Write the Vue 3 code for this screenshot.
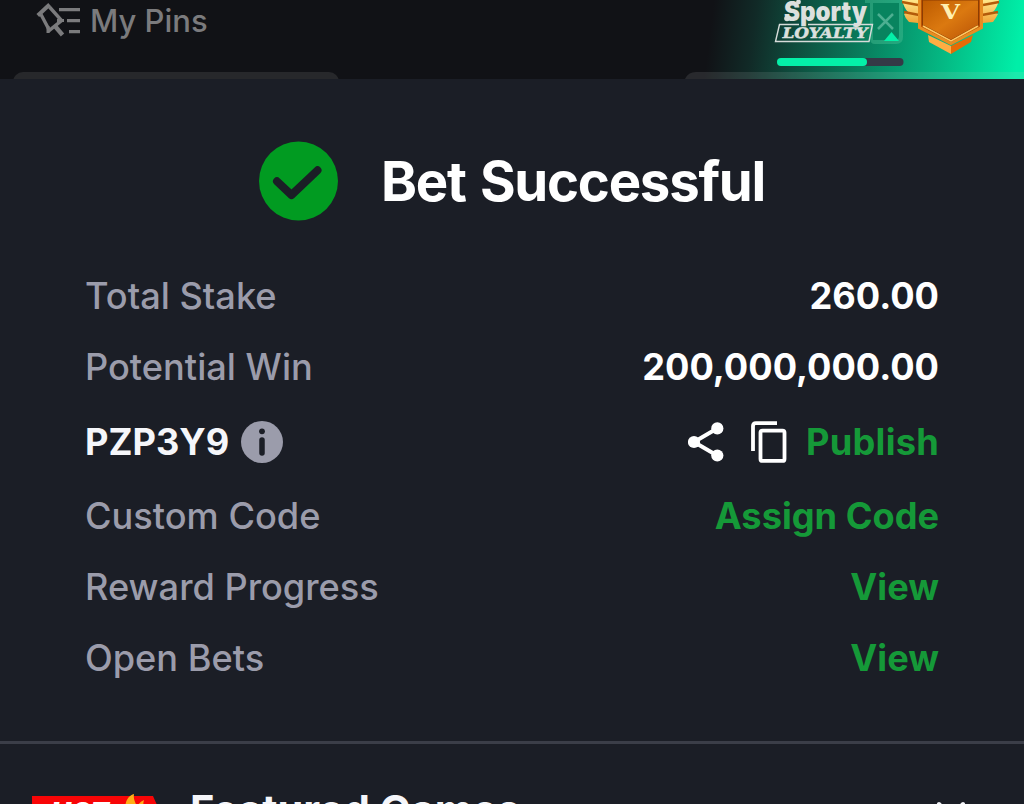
<script setup>
const summary = [
  { label: 'Total Stake', value: '260.00' },
  { label: 'Potential Win', value: '200,000,000.00' },
]
const actions = [
  { label: 'Custom Code', action: 'Assign Code' },
  { label: 'Reward Progress', action: 'View' },
  { label: 'Open Bets', action: 'View' },
]
</script>

<template>
  <main class="screen">
    <header class="topbar">
      <div class="pins">
        <svg class="pin-icon" width="46" height="38" viewBox="0 0 46 38" fill="none" stroke="#7b7b7d">
          <path d="M14.6 4.6 2.8 15.4" stroke-width="4" />
          <path d="M6 14.5 14.4 30.4 26.6 20.6 14.5 7" stroke-width="3.4" />
          <path d="M13 26V33M22 20.5H29" stroke-width="3" />
          <path d="M19.5 25.5 27.5 35" stroke-width="4.4" />
          <path d="M24 9.6H45M32 20.6H45M34 31.6H45" stroke-width="3.2" />
        </svg>
        <span>My Pins</span>
      </div>
      <div class="loyalty">
        <svg width="344" height="79" viewBox="680 0 344 79">
          <defs>
            <linearGradient id="glow" gradientUnits="userSpaceOnUse" x1="714" y1="0" x2="1020" y2="38">
              <stop offset="0" stop-color="#111216" />
              <stop offset=".14" stop-color="#112a27" />
              <stop offset=".28" stop-color="#0e4c3d" />
              <stop offset=".58" stop-color="#079069" />
              <stop offset=".82" stop-color="#03c68c" />
              <stop offset="1" stop-color="#00efa8" />
            </linearGradient>
            <linearGradient id="shield" x1="0" y1="0" x2="1" y2="1">
              <stop offset="0" stop-color="#bd5b00" />
              <stop offset=".5" stop-color="#db7910" />
              <stop offset="1" stop-color="#b95306" />
            </linearGradient>
            <linearGradient id="wing" x1="0" y1="0" x2="0" y2="1">
              <stop offset="0" stop-color="#ffe78a" />
              <stop offset="1" stop-color="#f0a536" />
            </linearGradient>
          </defs>
          <rect x="680" width="344" height="79" fill="url(#glow)" />
          <path d="M685 79Q688 72 696 72H1024V79Z" fill="#c8c8c8" fill-opacity=".13" />

          <path d="M865 0H903V37Q903 44 896 44H875Q870 44 870 38V3H865Z" fill="#45bb90" fill-opacity=".48" />
          <path d="M873 3H899V36Q899 40 895 40H873Z" fill="#08845f" />
          <path d="M878 14 893 29M893 14 878 29" stroke="#4daf91" stroke-width="2.5" />
          <path d="M884 41 891.5 32 899 41Z" fill="#04f0a8" />

          <text x="784" y="20.5" class="sporty" textLength="83" lengthAdjust="spacingAndGlyphs">Sporty</text>
          <circle cx="787" cy="18.5" r="2.8" fill="#dce0de" />
          <circle cx="798.5" cy="2" r="2.4" fill="#dce0de" />
          <path d="M799 24.5H779.5L775.5 41.5H869L872.5 24.5H808" fill="none" stroke="#d7dcda" stroke-width="1.4" />
          <text transform="translate(781.5 37.8) skewX(-12)" class="brand" textLength="85" lengthAdjust="spacingAndGlyphs">LOYALTY</text>
          <rect x="777" y="58" width="126.5" height="8" rx="4" fill="#343946" />
          <rect x="777" y="58" width="90" height="8" rx="4" fill="#04f0a8" />

          <path d="M902 0H918V23L909 22Q905 18 904 14L908 12Q904 8 902 0Z" fill="url(#wing)" />
          <path d="M999 0H983V23L993 22Q996 18 998 14L993 12Q997 8 999 0Z" fill="url(#wing)" />
          <path d="M902 2 918 5M904 12 919 15M999 2 983 5M998 12 982 15" stroke="#b35b0a" stroke-width="2.3" />
          <path d="M928 35 951 46V54L929 42Z" fill="#ffad43" />
          <path d="M973 35 951 46V54L971 42Z" fill="#e66b05" />
          <path d="M918 0H983V28L951 45 918 28Z" fill="#bb5304" />
          <path d="M919.5 0V27.5L951 43.5 981.5 27.5V0" fill="none" stroke="#e78d22" stroke-width="3" />
          <path d="M922.5 0H978.5V25L951 40 922.5 25Z" fill="url(#shield)" stroke="#8d3d03" stroke-width="1" />
          <path d="M923 26 951 41 978 26" fill="none" stroke="#ffca62" stroke-width="1.5" />
          <text x="941" y="18.5" class="rank" textLength="19" lengthAdjust="spacingAndGlyphs">V</text>
        </svg>
      </div>
      <div class="tab"></div>
    </header>

    <section class="receipt">
      <div class="heading">
        <svg width="80" height="80" viewBox="0 0 80 80">
          <circle cx="39.5" cy="40" r="39.5" fill="#019b21" />
          <path d="M18 40.3 32.5 54 58.5 29.3" fill="none" stroke="#1b1e26" stroke-width="8" stroke-linecap="round" stroke-linejoin="round" />
        </svg>
        <h1>Bet Successful</h1>
      </div>

      <div class="rows">
        <div v-for="item in summary" :key="item.label" class="row">
          <span class="label">{{ item.label }}</span>
          <strong>{{ item.value }}</strong>
        </div>
        <div class="row code-row">
          <div class="code">
            <strong>PZP3Y9</strong>
            <svg width="42" height="42" viewBox="0 0 42 42">
              <circle cx="21" cy="21" r="21" fill="#9b9cab" />
              <circle cx="21" cy="10.3" r="2.9" fill="#1b1e26" />
              <path d="M21 19V32" stroke="#1b1e26" stroke-width="5.5" stroke-linecap="round" />
            </svg>
          </div>
          <div class="tools">
            <svg width="36" height="40" viewBox="0 0 36 40">
              <path d="M29.5 6.2 6 20 29.5 33.8" fill="none" stroke="#fff" stroke-width="4" />
              <g fill="#fff"><circle cx="29.3" cy="6.4" r="6.1" /><circle cx="6" cy="20" r="6.1" /><circle cx="29.3" cy="33.5" r="6.1" /></g>
            </svg>
            <svg class="copy" width="36" height="42" viewBox="0 0 36 42" fill="none" stroke="#fff" stroke-width="3.8">
              <path d="M26 2.2H4.8Q2 2.2 2 5V30" />
              <rect x="9.5" y="9.6" width="24" height="30.3" rx="2" />
            </svg>
            <strong class="green publish">Publish</strong>
          </div>
        </div>
        <div v-for="item in actions" :key="item.label" class="row">
          <span class="label">{{ item.label }}</span>
          <strong class="green">{{ item.action }}</strong>
        </div>
      </div>
    </section>

    <section class="featured">
      <svg class="hot" width="126" height="44" viewBox="0 0 126 44">
        <path d="M0 5H121L125 14V44H0Z" fill="#f80506" />
        <text x="19" y="32.5" class="hot-text" textLength="58" lengthAdjust="spacingAndGlyphs">HOT</text>
        <path d="M94 28C91 13 95 5 102 3 101 9 104 12 105 16Q107 11 112 9 110 15 114 22L110 30Z" fill="#ffae16" />
      </svg>
      <h2>Featured Games</h2>
      <svg class="chevrons" width="34" height="24" viewBox="0 0 34 24" fill="none" stroke="#f5f6fa" stroke-width="4" stroke-linecap="round">
        <path d="M5 3 17 15 29 3" />
      </svg>
    </section>
  </main>
</template>

<style>
html, body { margin: 0; overflow: hidden; background: #1b1e26; }
</style>

<style scoped>
* { box-sizing: border-box; }
svg { display: block; flex: none; }
.screen { width: 1024px; height: 804px; overflow: hidden; background: #1b1e26; color: #fff; font-family: Inter, Roboto, sans-serif; white-space: nowrap; }
.topbar { position: relative; display: flex; justify-content: space-between; height: 79px; overflow: hidden; background: #111216; }
.pins { display: flex; align-items: flex-start; padding-left: 35px; color: #7b7b7d; font-size: 31px; font-weight: 450; line-height: 42px; }
.pins span { margin-left: 9px; }
.tab { position: absolute; left: 13px; top: 72px; width: 326px; height: 20px; border-radius: 12px; background: #27282b; }
.sporty { font: 900 27px Inter, sans-serif; fill: #dce0de; }
.brand { font: 700 14.5px "DejaVu Serif", serif; fill: #dce0de; stroke: #dce0de; stroke-width: .5px; }
.rank { font: 700 21px "DejaVu Serif", serif; fill: #fff0b0; }
.receipt { height: 665px; padding: 62px 85px 0; border-bottom: 3px solid #3b3e48; }
.heading { display: flex; align-items: center; height: 80px; padding-left: 174px; }
h1 { margin: 0 0 0 42px; font-size: 54.5px; font-weight: 700; line-height: 80px; letter-spacing: -1.25px; word-spacing: 2.5px; }
.rows { padding-top: 39px; }
.row { display: flex; align-items: center; justify-content: space-between; height: 71px; font-size: 36.2px; line-height: 48px; }
.label { color: #9b9cab; font-weight: 500; letter-spacing: 0; }
strong { font-weight: 650; letter-spacing: 0; }
.code-row { height: 78px; padding-top: 1px; }
.code, .tools { display: flex; align-items: center; }
.code strong { color: #f5f6fa; }
.code svg { margin-left: 12px; }
.copy { margin: 0 19px 0 27px; }
.green { color: #159938; }
.publish { letter-spacing: .25px; }
.featured { display: flex; align-items: flex-start; height: 60px; padding: 46px 56px 0 32px; }
h2 { margin: -7px auto 0 32px; color: #f5f6fa; font-size: 41.5px; font-weight: 700; line-height: 54px; letter-spacing: -.05px; }
.hot { margin-top: 1px; }
.hot-text { font: italic 900 30px Inter, sans-serif; fill: #fff; }
.chevrons { margin-top: 11px; }
</style>
